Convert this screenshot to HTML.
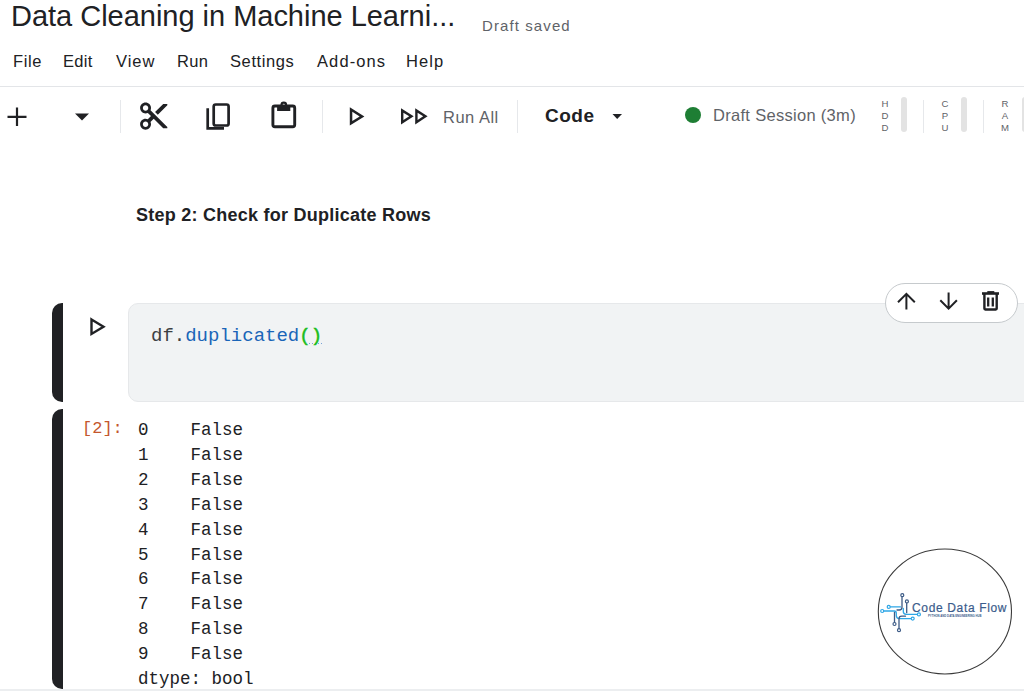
<!DOCTYPE html>
<html><head><meta charset="utf-8">
<style>
*{margin:0;padding:0;box-sizing:border-box}
html,body{width:1024px;height:699px;overflow:hidden;background:#fff;font-family:"Liberation Sans",sans-serif;color:#202124}
.a{position:absolute;white-space:nowrap}
#title{left:11px;top:-1px;font-size:29px;line-height:34px;letter-spacing:-0.02px;color:#202124}
#saved{left:482px;top:16px;font-size:15px;line-height:20px;letter-spacing:1.1px;color:#5f6368}
.menu{top:51px;font-size:16.5px;line-height:20px;color:#202124}
#hr1{left:0;top:86px;width:1024px;height:1px;background:#e3e5e8}
.vsep{width:1px;background:#e6e8eb;top:100px;height:33px}
#runall{left:443px;top:107px;font-size:16.5px;letter-spacing:0.5px;line-height:20px;color:#5f6368}
#code{left:545px;top:105px;font-size:19px;line-height:22px;letter-spacing:0.5px;font-weight:bold;color:#202124}
#dot{left:685px;top:107px;width:16px;height:16px;border-radius:50%;background:#1e7e34}
#sess{left:713px;top:105px;font-size:16.5px;letter-spacing:0.3px;line-height:20px;color:#5f6368}
.res{font-size:9.6px;line-height:11.9px;color:#5f6368;text-align:center;width:10px;top:98.3px}
.bar{width:6px;height:35px;top:97px;background:#e3e3e3;border-radius:3px}
#step{left:136px;top:204px;font-size:18px;line-height:22px;letter-spacing:0.25px;font-weight:bold;color:#202124}
.lbar{left:52px;width:11px;background:#202124;border-radius:10px 0 0 10px}
#codebox{left:128px;top:303px;width:910px;height:99px;background:#f1f3f4;border:1px solid #e6e8ea;border-radius:10px}
.mono{font-family:"Liberation Mono",monospace}
#codetxt{left:151px;top:325px;font-size:19px;line-height:22px;color:#3c4043}
#pill{left:885px;top:283px;width:133px;height:40px;border:1px solid #c6cacd;border-radius:20px;background:#fff}
#prompt{left:82px;top:418px;font-size:17px;line-height:22px;color:#c4572e}
#out{white-space:pre;left:138px;top:418px;font-size:17.5px;line-height:24.9px;color:#202124}
#hr2{left:0;top:689px;width:1024px;height:2px;background:#eceef0}
</style></head><body>
<div class="a" id="title">Data Cleaning in Machine Learni...</div>
<div class="a" id="saved">Draft saved</div>
<div class="a menu" style="left:13px;letter-spacing:0.6px">File</div>
<div class="a menu" style="left:63px;letter-spacing:0.3px">Edit</div>
<div class="a menu" style="left:116px;letter-spacing:1.0px">View</div>
<div class="a menu" style="left:177px;letter-spacing:0.3px">Run</div>
<div class="a menu" style="left:230px;letter-spacing:0.6px">Settings</div>
<div class="a menu" style="left:317px;letter-spacing:1.1px">Add-ons</div>
<div class="a menu" style="left:406px;letter-spacing:1.05px">Help</div>
<div class="a" id="hr1"></div>

<!-- toolbar -->
<svg class="a" style="left:0;top:90px" width="1024" height="50" viewBox="0 90 1024 50">
  <g fill="none" stroke="#202124" stroke-width="2.2">
    <path d="M17 107.5V126M7.5 116.8H26.5"/>
  </g>
  <path d="M75 113.5H89L82 120.5Z" fill="#202124"/>
  <!-- scissors -->
  <g transform="translate(137.4 99.8) scale(1.36)" fill="#202124"><path d="M9.64 7.64c.23-.5.36-1.05.36-1.64 0-2.21-1.79-4-4-4S2 3.790 2 6s1.79 4 4 4c.59 0 1.14-.13 1.640-.36L10 12l-2.36 2.36C7.14 14.13 6.59 14 6 14c-2.21 0-4 1.79-4 4s1.79 4 4 4 4-1.79 4-4c0-.59-.13-1.14-.36-1.64L12 14l7 7h3v-1L9.64 7.64zM6 8c-1.1 0-2-.89-2-2s.9-2 2-2 2 .89 2 2-.9 2-2 2zm0 12c-1.1 0-2-.89-2-2s.9-2 2-2 2 .89 2 2-.9 2-2 2zM19 3l-6 6 2 2 7-7V3z"/></g>
  <!-- copy -->
  <g fill="none" stroke="#202124" stroke-width="2.7">
    <path d="M207.7 108.3V128.4H224"/>
    <rect x="213.7" y="104.5" width="14.9" height="21" rx="2"/>
  </g>
  <!-- clipboard -->
  <rect x="272.9" y="106" width="21.8" height="20.7" rx="2" fill="none" stroke="#202124" stroke-width="2.9"/>
  <path d="M277.1 105H290.3V111H277.1Z" fill="#202124"/>
  <circle cx="283.8" cy="105" r="2.3" fill="none" stroke="#202124" stroke-width="2.2"/>
  <!-- play -->
  <path fill-rule="evenodd" fill="#202124" d="M349.80 107.30L364.40 116.45L349.80 125.60ZM352.30 111.82L359.69 116.45L352.30 121.08Z"/>
  <!-- fast forward -->
  <path fill-rule="evenodd" fill="#202124" d="M401.00 108.30L413.70 116.35L401.00 124.40ZM403.40 112.66L409.22 116.35L403.40 120.04ZM415.20 108.30L427.60 116.35L415.20 124.40ZM417.60 112.72L423.19 116.35L417.60 119.98Z"/>
  <path d="M612.5 114H622L617.2 119Z" fill="#202124"/>
</svg>
<div class="a vsep" style="left:120px"></div>
<div class="a vsep" style="left:322px"></div>
<div class="a" id="runall">Run All</div>
<div class="a vsep" style="left:517px"></div>
<div class="a" id="code">Code</div>
<div class="a" id="dot"></div>
<div class="a" id="sess">Draft Session (3m)</div>
<div class="a res" style="left:880px">H<br>D<br>D</div>
<div class="a bar" style="left:901px"></div>
<div class="a vsep" style="left:923px"></div>
<div class="a res" style="left:940px">C<br>P<br>U</div>
<div class="a bar" style="left:961px"></div>
<div class="a vsep" style="left:983px"></div>
<div class="a res" style="left:1000px">R<br>A<br>M</div>
<div class="a bar" style="left:1022px"></div>

<div class="a" id="step">Step 2: Check for Duplicate Rows</div>

<div class="a lbar" style="top:303px;height:99px"></div>
<svg class="a" style="left:88px;top:316px" width="20" height="22" viewBox="88 316 20 22">
  <path d="M91.5 319.5L103.5 326.8L91.5 334Z" fill="none" stroke="#202124" stroke-width="2.4"/>
</svg>
<div class="a" id="codebox"></div>
<div class="a" style="left:309px;top:343px;width:14px;height:1px;background-image:linear-gradient(90deg,#5a8fd0 50%,transparent 50%);background-size:3px 1px;opacity:.8"></div>
<div class="a mono" id="codetxt">df.<span style="color:#1a65b8">duplicated</span><span style="color:#1cbd1c;-webkit-text-stroke:0.5px #1cbd1c">()</span></div>

<div class="a" id="pill"></div>
<svg class="a" style="left:885px;top:283px" width="139" height="40" viewBox="885 283 139 40">
  <g fill="none" stroke="#202124" stroke-width="2">
    <path d="M906.4 293.8V309.5M898 302.2L906.4 293.8L914.8 302.2"/>
    <path d="M948.6 292.4V308.6M940.3 300.3L948.6 308.6L956.9 300.3"/>
  </g>
  <path d="M982 292.2H999V294.8H982Z" fill="#202124"/>
  <path d="M987.3 291.1H994.3V293H987.3Z" fill="#202124"/>
  <path d="M984.4 294V308.6Q984.4 309.5 985.3 309.5H995.8Q996.7 309.5 996.7 308.6V294" fill="none" stroke="#202124" stroke-width="2.4"/>
  <path d="M988.2 297.6V306.4M992.8 297.6V306.4" stroke="#202124" stroke-width="2.3"/>
</svg>

<div class="a lbar" style="top:409px;height:280px"></div>
<div class="a mono" id="prompt">[2]:</div>
<div class="a mono" id="out">0    False<br>1    False<br>2    False<br>3    False<br>4    False<br>5    False<br>6    False<br>7    False<br>8    False<br>9    False<br>dtype: bool</div>

<div class="a" id="hr2"></div>

<!-- logo -->
<svg class="a" style="left:870px;top:540px" width="154" height="145" viewBox="870 540 154 145">
  <ellipse cx="944.9" cy="611.5" rx="66.6" ry="62.5" fill="#fff" stroke="#3a3a3a" stroke-width="1.1"/>
  <g fill="none" stroke-width="1.3" stroke-linecap="round">
    <g stroke="#2ea6e6">
      <path d="M890.2 606.9H900.5"/>
      <path d="M883.7 611H894.2Q896.3 611 896.3 613.2V615.6Q896.3 618.6 899.3 618.6H911.2"/>
      <path d="M903.3 608.4V611.6Q903.3 614.4 906.1 614.4H917.4"/>
    </g>
    <g stroke="#3d5b86">
      <path d="M902 596.8V607.3Q902 610 899.3 610H897"/>
      <path d="M906.7 603V612.7"/>
      <path d="M894.5 612.4V622.5"/>
      <path d="M905.5 616.2H901.7Q899 616.2 899 618.9V628.7"/>
    </g>
  </g>
  <g fill="#fff" stroke-width="1.2">
    <g stroke="#2ea6e6">
      <circle cx="888.7" cy="606.9" r="1.5"/>
      <circle cx="882.2" cy="611" r="1.5"/>
      <circle cx="912.7" cy="618.6" r="1.5"/>
      <circle cx="918.9" cy="614.4" r="1.5"/>
    </g>
    <g stroke="#3d5b86">
      <circle cx="902.3" cy="595.2" r="1.5"/>
      <circle cx="906.9" cy="601.4" r="1.5"/>
      <circle cx="894.5" cy="624" r="1.5"/>
      <circle cx="899" cy="630.2" r="1.5"/>
    </g>
  </g>
  <text x="912" y="611.8" font-family="Liberation Sans" font-size="12" fill="#3b5c8c" stroke="#3b5c8c" stroke-width="0.2" textLength="94.5" lengthAdjust="spacing">Code Data Flow</text>
  <text x="928" y="616.8" font-family="Liberation Sans" font-size="3.4" font-weight="bold" fill="#3b5c8c" textLength="53.5" lengthAdjust="spacingAndGlyphs">PYTHON AND DATA ENGINEERING HUB</text>
</svg>
</body></html>
